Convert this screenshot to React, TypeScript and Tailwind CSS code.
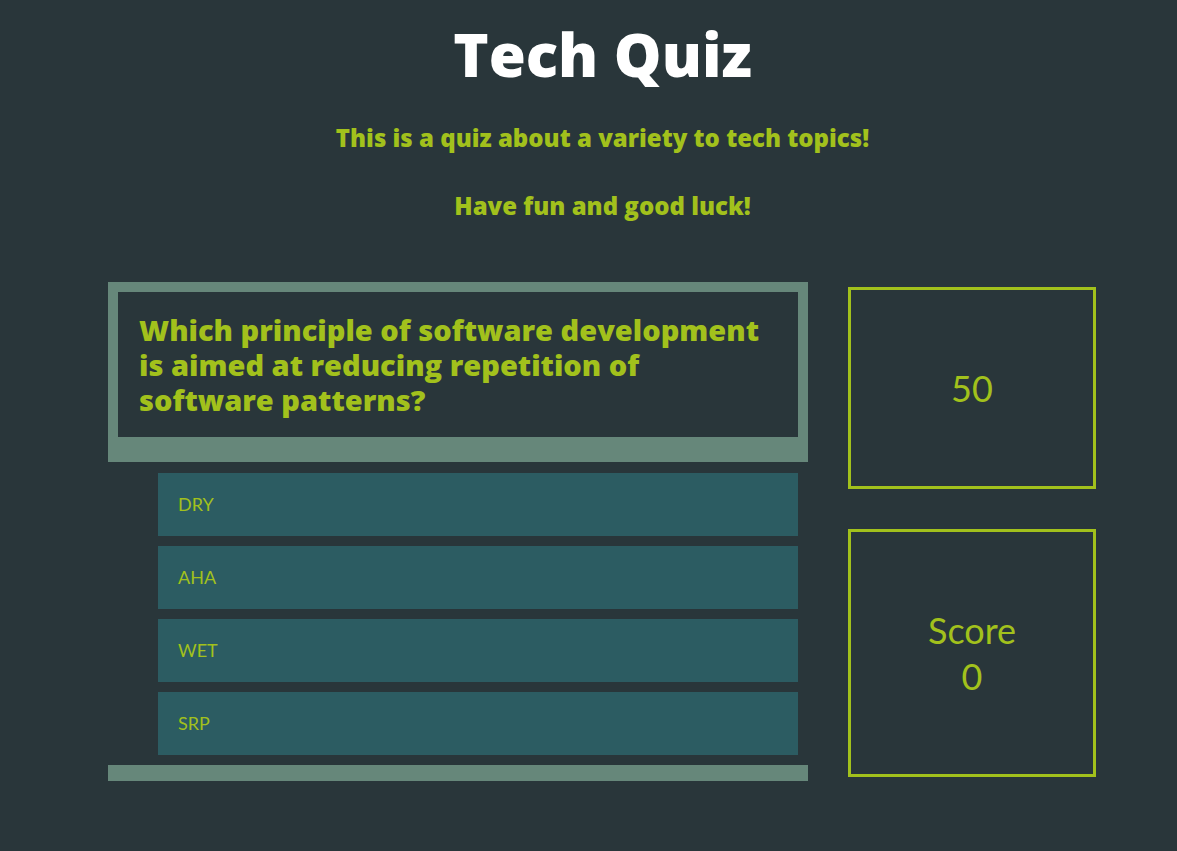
const answers = ['DRY', 'AHA', 'WET', 'SRP']

const bold = { fontFamily: "'Open Sans', Lato, sans-serif" }

export default function App() {
  return (
    <div
      className="min-h-[851px] bg-[#29363a] text-[#a2c11c]"
      style={{ fontFamily: "Lato, 'Open Sans', sans-serif" }}
    >
      <header className="flex flex-col items-center pt-[20px] pl-[28px]" style={bold}>
        <h1 className="text-[60px] font-extrabold leading-[68px] text-white">Tech Quiz</h1>
        <p className="mt-[36px] text-[24px] font-extrabold leading-[28px]">
          This is a quiz about a variety to tech topics!
        </p>
        <p className="mt-[40px] text-[24px] font-extrabold leading-[28px]">Have fun and good luck!</p>
      </header>

      <main className="mt-[62px] flex gap-[40px] pl-[108px]">
        <section className="w-[700px]">
          <div className="bg-[#66877a] p-[10px] pb-[25px]">
            <div className="bg-[#29363a] px-[21px] py-[20px]">
              <h2 className="text-[29px] font-extrabold leading-[35px]" style={bold}>
                Which principle of software development
                <br />
                is aimed at reducing repetition of
                <br />
                software patterns?
              </h2>
            </div>
          </div>
          <ul className="ml-[50px] mr-[10px] flex flex-col gap-[10px] pt-[11px] pb-[10px]">
            {answers.map((a) => (
              <li key={a} className="flex h-[63px] items-center bg-[#2c5c62] px-[20px] text-[18px]">
                {a}
              </li>
            ))}
          </ul>
          <div className="h-[16px] bg-[#66877a]" />
        </section>

        <aside className="flex w-[248px] flex-col gap-[40px] pt-[5px]">
          <div className="flex h-[202px] items-center justify-center border-[3px] border-[#a2c11c] text-[36px]">
            50
          </div>
          <div className="flex h-[248px] flex-col items-center justify-center border-[3px] border-[#a2c11c] text-[36px] leading-[46px]">
            <span>Score</span>
            <span>0</span>
          </div>
        </aside>
      </main>
    </div>
  )
}
